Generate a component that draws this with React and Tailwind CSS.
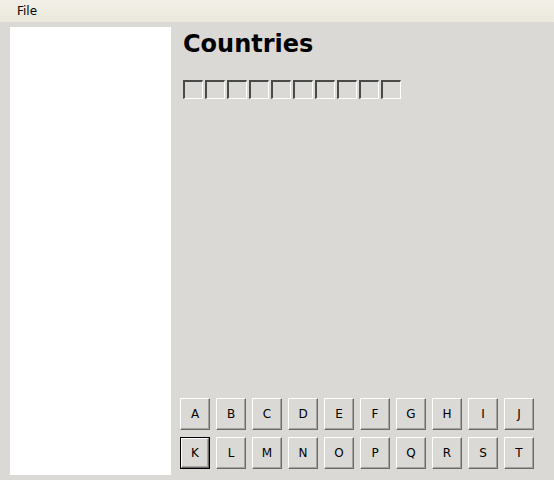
const ROW_ONE = ["A", "B", "C", "D", "E", "F", "G", "H", "I", "J"];
const ROW_TWO = ["K", "L", "M", "N", "O", "P", "Q", "R", "S", "T"];

function LetterButton({ letter, focused }) {
  return (
    <button
      type="button"
      className={
        "flex h-[32px] w-[30px] items-center justify-center text-[12px] text-black " +
        (focused ? "border border-black" : "")
      }
    >
      <span className="flex h-full w-full items-center justify-center border border-t-white border-l-white border-r-[#6b6a66] border-b-[#6b6a66] bg-[#dad9d5] shadow-[inset_-1px_-1px_0_#a5a4a0]">
        {letter}
      </span>
    </button>
  );
}

function Slot() {
  return (
    <div className="h-[19px] w-[20px] border-t-2 border-l-2 border-t-[#4a4a48] border-l-[#4a4a48] border-r border-b border-r-white border-b-white" />
  );
}

export default function App() {
  return (
    <div
      className="flex h-[480px] w-[554px] flex-col bg-[#dad9d5]"
      style={{ fontFamily: '"DejaVu Sans", sans-serif' }}
    >
      <div className="flex h-[22px] items-center bg-gradient-to-b from-[#f2efe6] to-[#ebe8dd] pl-[17px] text-[12px] text-black">
        File
      </div>
      <div className="flex flex-1 pb-[5px] pl-[10px] pt-[5px]">
        <div className="w-[161px] bg-white" />
        <div className="flex flex-1 flex-col pb-[6px] pl-[9px]">
          <h1 className="ml-[3px] mt-[3px] text-[24px] font-bold leading-[28px] text-black">Countries</h1>
          <div className="ml-[3px] mt-[22px] flex gap-[2px]">
            {ROW_ONE.map((l) => (
              <Slot key={l} />
            ))}
          </div>
          <div className="mt-auto flex flex-col gap-[7px]">
            <div className="flex gap-[6px]">
              {ROW_ONE.map((l) => (
                <LetterButton key={l} letter={l} />
              ))}
            </div>
            <div className="flex gap-[6px]">
              {ROW_TWO.map((l) => (
                <LetterButton key={l} letter={l} focused={l === "K"} />
              ))}
            </div>
          </div>
        </div>
      </div>
    </div>
  );
}
